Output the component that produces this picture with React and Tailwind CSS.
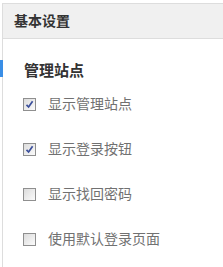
const items = [
  { label: '显示管理站点', checked: true },
  { label: '显示登录按钮', checked: true },
  { label: '显示找回密码', checked: false },
  { label: '使用默认登录页面', checked: false },
]

function Box({ checked }) {
  return (
    <span className="flex h-[13px] w-[13px] shrink-0 items-center justify-center border border-[#8f8f8f] bg-gradient-to-br from-[#dcdcdc] to-[#fbfbfb]">
      {checked && (
        <svg width="9" height="9" viewBox="0 0 9 9">
          <path d="M1.5 4.8 L3.6 7 L7.6 1.2" fill="none" stroke="#3b4f9b" strokeWidth="1.7" />
        </svg>
      )}
    </span>
  )
}

export default function App() {
  return (
    <div className="h-[267px] w-[223px] overflow-hidden bg-white pt-[3px]" style={{ fontFamily: '"Liberation Sans", "Noto Sans CJK SC", sans-serif' }}>
      <div className="relative ml-[2px] h-full border-l border-t border-[#dddddd]">
        {/* header */}
        <div className="flex h-[35px] items-center border-b border-[#dddddd] bg-[#f0f0f0] pl-[11px] text-[14px] font-bold text-[#333]">
          基本设置
        </div>

        {/* section title */}
        <div className="relative mt-[24px] flex h-[16px] items-center pl-[21px] text-[15px] font-bold text-[#333]">
          <span className="absolute left-[-3px] top-[-3px] h-[17px] w-[3px] bg-[#3a8ee6]" />
          管理站点
        </div>

        <div className="mt-[18px] flex flex-col gap-[31px] pl-[20px]">
          {items.map(it => (
            <div key={it.label} className="flex h-[14px] items-center gap-[12px] text-[14px] text-[#717171]">
              <Box checked={it.checked} />
              <span>{it.label}</span>
            </div>
          ))}
        </div>
      </div>
    </div>
  )
}
